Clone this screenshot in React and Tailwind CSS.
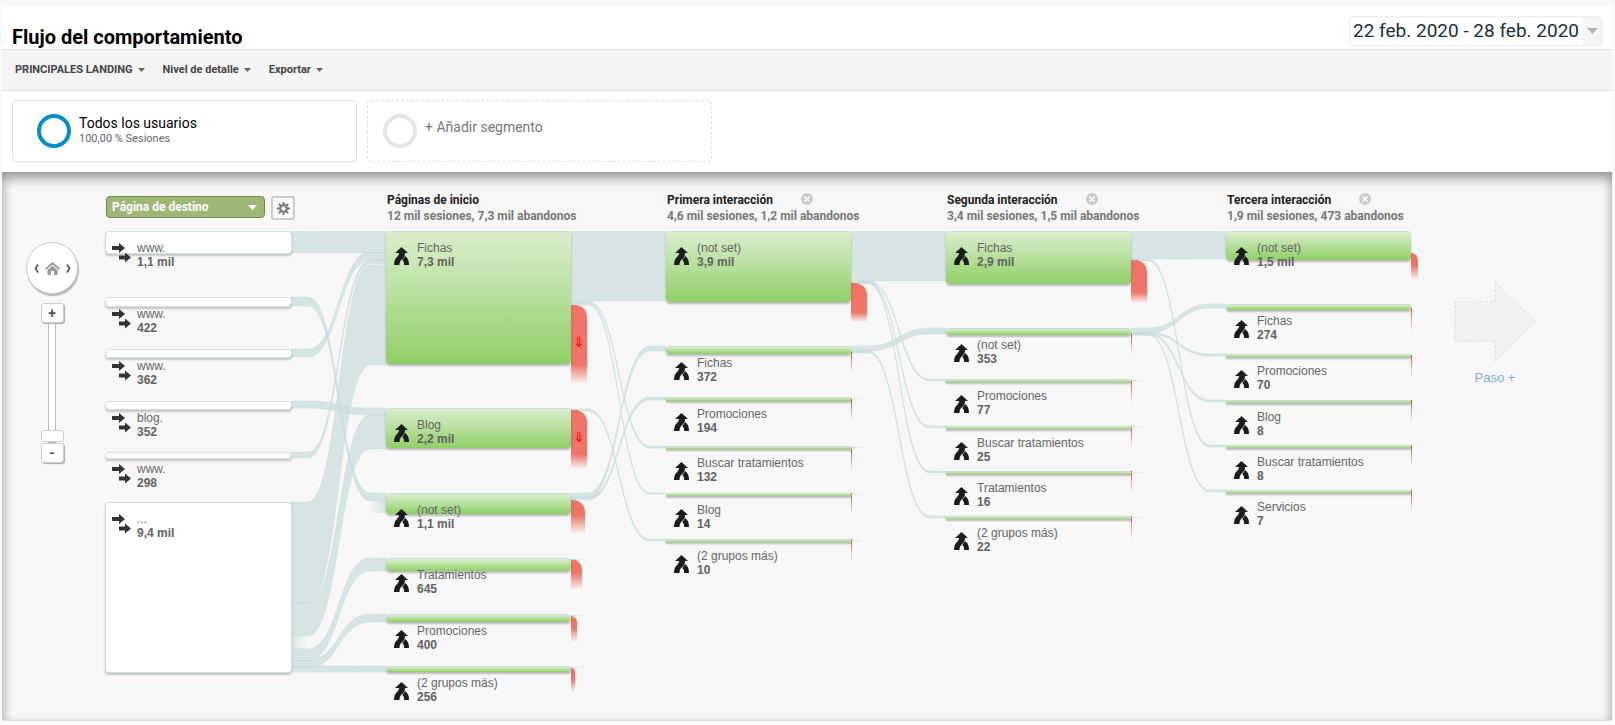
import React, { useState } from 'react'

const columns = [
  {
    title: 'Páginas de inicio',
    summary: '12 mil sesiones, 7,3 mil abandonos',
    nodes: [
      { y: 0, h: 133, name: 'Fichas', value: '7,3 mil', drop: { y: 74, w: 16, h: 79, arrow: true } },
      { y: 177, h: 40, name: 'Blog', value: '2,2 mil', drop: { y: 179, w: 16, h: 59, arrow: true } },
      { y: 262, h: 21, name: '(not set)', value: '1,1 mil', drop: { y: 269, w: 14, h: 34 } },
      { y: 327, h: 13, name: 'Tratamientos', value: '645', drop: { y: 328, w: 11, h: 31 }, stub: true },
      { y: 383, h: 8, name: 'Promociones', value: '400', drop: { y: 385, w: 6, h: 26 }, stub: true },
      { y: 435, h: 6, name: '(2 grupos más)', value: '256', drop: { y: 437, w: 4, h: 24 }, stub: true },
    ],
  },
  {
    title: 'Primera interacción',
    summary: '4,6 mil sesiones, 1,2 mil abandonos',
    removable: true,
    nodes: [
      { y: 0, h: 71, name: '(not set)', value: '3,9 mil', drop: { y: 52, w: 16, h: 39 } },
      { y: 115, h: 8, name: 'Fichas', value: '372', drop: { y: 121, w: 1, h: 21 } },
      { y: 166, h: 4, name: 'Promociones', value: '194', drop: { y: 168, w: 1, h: 22 }, stub: true },
      { y: 215, h: 3, name: 'Buscar tratamientos', value: '132', drop: { y: 218, w: 1, h: 22 }, stub: true },
      { y: 262, h: 3, name: 'Blog', value: '14', drop: { y: 262, w: 1, h: 22 }, stub: true },
      { y: 308, h: 3, name: '(2 grupos más)', value: '10', drop: { y: 308, w: 1, h: 22 }, stub: true },
    ],
  },
  {
    title: 'Segunda interacción',
    summary: '3,4 mil sesiones, 1,5 mil abandonos',
    removable: true,
    nodes: [
      { y: 0, h: 53, name: 'Fichas', value: '2,9 mil', drop: { y: 29, w: 16, h: 43 } },
      { y: 97, h: 7, name: '(not set)', value: '353', drop: { y: 103, w: 1, h: 21 } },
      { y: 148, h: 3, name: 'Promociones', value: '77', drop: { y: 149, w: 1, h: 22 }, stub: true },
      { y: 195, h: 3, name: 'Buscar tratamientos', value: '25', drop: { y: 195, w: 1, h: 22 }, stub: true },
      { y: 240, h: 3, name: 'Tratamientos', value: '16', drop: { y: 240, w: 1, h: 22 }, stub: true },
      { y: 285, h: 3, name: '(2 grupos más)', value: '22', drop: { y: 285, w: 1, h: 22 }, stub: true },
    ],
  },
  {
    title: 'Tercera interacción',
    summary: '1,9 mil sesiones, 473 abandonos',
    removable: true,
    nodes: [
      { y: 0, h: 29, name: '(not set)', value: '1,5 mil', drop: { y: 22, w: 7, h: 27 } },
      { y: 73, h: 6, name: 'Fichas', value: '274', drop: { y: 77, w: 1, h: 22 } },
      { y: 123, h: 3, name: 'Promociones', value: '70', drop: { y: 124, w: 1, h: 22 } },
      { y: 169, h: 3, name: 'Blog', value: '8', drop: { y: 169, w: 1, h: 22 } },
      { y: 214, h: 3, name: 'Buscar tratamientos', value: '8', drop: { y: 214, w: 1, h: 22 } },
      { y: 259, h: 3, name: 'Servicios', value: '7', drop: { y: 259, w: 1, h: 22 } },
    ],
  },
]

const landings = [
  { y: 0, h: 23, name: 'www.', value: '1,1 mil' },
  { y: 66, h: 10, name: 'www.', value: '422' },
  { y: 118, h: 9, name: 'www.', value: '362' },
  { y: 170, h: 9, name: 'blog.', value: '352' },
  { y: 221, h: 7, name: 'www.', value: '298' },
  { y: 271, h: 171, name: '...', value: '9,4 mil' },
]

// [gap between columns, source top, source bottom, target top, target bottom]
const flows = [
  [0, 0, 22, 0, 22],
  [0, 66, 75, 262, 270],
  [0, 118, 126, 21, 29],
  [0, 170, 177, 177, 184],
  [0, 221, 227, 29, 33],
  [0, 271, 372, 34, 134],
  [0, 372, 405, 184, 218],
  [0, 418, 430, 327, 340],
  [0, 429, 437, 383, 391],
  [0, 435, 441, 435, 441],
  [1, 0, 70, 0, 70],
  [1, 70, 72, 215, 217],
  [1, 72, 74, 262, 263],
  [1, 178, 180, 308, 310],
  [1, 262, 267, 115, 120],
  [1, 266, 269, 166, 169],
  [2, 0, 50, 0, 50],
  [2, 50, 51, 148, 150],
  [2, 51, 52, 195, 197],
  [2, 51, 53, 240, 242],
  [2, 115, 120, 97, 103],
  [2, 120, 122, 285, 287],
  [3, 0, 28, 0, 28],
  [3, 28, 30, 214, 216],
  [3, 97, 102, 73, 77],
  [3, 101, 103, 123, 125],
  [3, 102, 104, 169, 171],
  [3, 103, 104, 259, 261],
]

function flowPath([gap, s0, s1, t0, t1]) {
  const x = 185 + gap * 280
  const a = x + 17
  const b = x + 79
  const m = x + 48
  const end = x + 95
  return `M${x} ${s0}H${a}C${m} ${s0} ${m} ${t0} ${b} ${t0}H${end}V${t1}H${b}C${m} ${t1} ${m} ${s1} ${a} ${s1}H${x}Z`
}

function Caret({ className = 'text-[#666]' }) {
  return (
    <svg className={className} width="7" height="4" viewBox="0 0 7 4" fill="currentColor" aria-hidden="true">
      <path d="M0 0h7L3.5 4z" />
    </svg>
  )
}

function Header() {
  return (
    <header className="flex h-[43px] justify-between pl-2.5 pr-2.5">
      <h1 className="self-end text-xl leading-[24px] font-bold text-black">Flujo del comportamiento</h1>
      <button className="mt-2.5 flex h-[30px] items-center overflow-hidden rounded border border-[#eee] bg-white pl-[3px] text-[19px] leading-[28px] text-[#222d3a]">
        22 feb. 2020 - 28 feb. 2020
        <span className="ml-1 flex h-full w-[18px] items-center justify-center bg-[#f5f5f5]">
          <svg width="11" height="6" viewBox="0 0 11 6" fill="#b3b3b3" aria-hidden="true"><path d="M0 0h11L5.5 6z" /></svg>
        </span>
      </button>
    </header>
  )
}

function Toolbar() {
  return (
    <div className="flex h-[42px] items-center gap-[18px] border-y border-[#e2e2e2] bg-[#f4f4f4] px-[13px] text-[11px] font-bold text-[#444]">
      {['PRINCIPALES LANDING', 'Nivel de detalle', 'Exportar'].map(label => (
        <button key={label} className="flex items-center gap-[5px]">
          {label}
          <Caret />
        </button>
      ))}
    </div>
  )
}

function Segments() {
  return (
    <div className="flex gap-2.5 px-2.5 pt-[9px] pb-2.5">
      <button className="flex h-[62px] w-[345px] items-center rounded border border-[#e2e2e2] pl-6 text-left">
        <span className="mr-2 size-[34px] rounded-full border-4 border-[#058dc7]" />
        <span className="flex flex-col pb-0.5">
          <span className="text-sm leading-[18px] text-black">Todos los usuarios</span>
          <span className="text-[11px] leading-[14px] text-[#666]">100,00 % Sesiones</span>
        </span>
      </button>
      <button className="flex h-[62px] w-[345px] items-center rounded border border-dashed border-[#e2e2e2] pl-[15px] text-left">
        <span className="mr-2 size-[34px] rounded-full border-4 border-[#e5e5e5]" />
        <span className="pb-2 text-sm text-[#777]">+ Añadir segmento</span>
      </button>
    </div>
  )
}

function ZoomControls() {
  const [zoom, setZoom] = useState(0)
  const btn = 'flex h-5 w-[23px] items-center justify-center rounded-[3px] border border-[#ccc] bg-white text-sm font-bold leading-none text-[#555] shadow-[1px_1px_1px_#aaa]'

  return (
    <div className="flex w-[52px] shrink-0 flex-col items-center pt-[54px]">
      <div className="flex size-[52px] items-center justify-center gap-[6px] rounded-full border border-[#ccc] bg-white text-[#555] shadow-[1px_2px_1px_#b5b5b5]">
        <button aria-label="Desplazar a la izquierda">
          <svg width="5" height="9" viewBox="0 0 5 9" fill="none" stroke="currentColor" strokeWidth="1.7"><path d="M4 .5L1.5 4.5 4 8.5" /></svg>
        </button>
        <button aria-label="Inicio">
          <svg width="15" height="13" viewBox="0 0 15 13" fill="#999">
            <path d="M7.5 0L15 6.5l-1.2 1.3L7.5 2.4 1.2 7.8 0 6.5z" />
            <path d="M7.5 3.8L12.5 8v5H9V9H6v4H2.5V8z" />
          </svg>
        </button>
        <button aria-label="Desplazar a la derecha">
          <svg width="5" height="9" viewBox="0 0 5 9" fill="none" stroke="currentColor" strokeWidth="1.7"><path d="M1 .5l2.5 4L1 8.5" /></svg>
        </button>
      </div>
      <div className="mt-[9px] flex flex-col items-center">
        <button className={btn} aria-label="Acercar" onClick={() => setZoom(Math.min(10, zoom + 1))}>+</button>
        <input
          type="range"
          min="0"
          max="10"
          value={zoom}
          onChange={e => setZoom(Number(e.target.value))}
          aria-label="Zoom"
          className="h-[120px] w-[23px] appearance-none bg-transparent [direction:rtl] [writing-mode:vertical-lr] [&::-webkit-slider-runnable-track]:box-border [&::-webkit-slider-runnable-track]:mx-auto [&::-webkit-slider-runnable-track]:w-2 [&::-webkit-slider-runnable-track]:border [&::-webkit-slider-runnable-track]:border-solid [&::-webkit-slider-runnable-track]:border-[#bbb] [&::-webkit-slider-runnable-track]:bg-white [&::-webkit-slider-thumb]:box-border [&::-webkit-slider-thumb]:-ml-2 [&::-webkit-slider-thumb]:h-3 [&::-webkit-slider-thumb]:w-[23px] [&::-webkit-slider-thumb]:appearance-none [&::-webkit-slider-thumb]:rounded-[3px] [&::-webkit-slider-thumb]:border [&::-webkit-slider-thumb]:border-solid [&::-webkit-slider-thumb]:border-[#ccc] [&::-webkit-slider-thumb]:bg-white"
        />
        <button className={btn} aria-label="Alejar" onClick={() => setZoom(Math.max(0, zoom - 1))}>-</button>
      </div>
    </div>
  )
}

function NodeLabel({ name, value, source }) {
  return (
    <div className="absolute top-2.5 left-0 flex w-full font-['Liberation_Sans',sans-serif] text-xs leading-[14px] text-[#666]">
      <span className={source ? 'w-[31px] shrink-0 pt-0.5 pl-1.5' : 'w-[31px] shrink-0 pt-1.5 pl-2'}>
        {source ? (
          <svg width="19" height="20" viewBox="0 0 19 20" fill="#333" aria-hidden="true">
            <path d="M0 3h7V0l6 5-6 5V7H0z" />
            <path d="M7 12.5h6v-3l6 5-6 5v-3H7z" />
          </svg>
        ) : (
          <svg width="15" height="18" viewBox="0 0 15 18" fill="#1c1c1c" aria-hidden="true">
            <path d="M7.5 0L14 6h-3c0 3-.7 4-2.5 5.7C6.3 13.7 5.5 14.7 5.5 18H0c0-4 1-6 3-8 1.7-1.7 2-2.5 2-4H1z" />
            <path d="M11.2 9C14 11.5 15 13.5 15 18h-4.8c0-2.5-.4-3.5-1.9-5z" />
          </svg>
        )}
      </span>
      <span className="flex flex-col whitespace-nowrap">
        <span>{name}</span>
        <b className="text-[#626262]">{value}</b>
      </span>
    </div>
  )
}

function Dropoff({ y, w, h, arrow }) {
  const fade = w === 16
    ? 'from-[#ee7465] from-75% rounded-tr-xl'
    : w > 1 ? 'from-[#ee7465] from-45% rounded-tr-xl' : 'from-[#e2452f]'
  return (
    <div
      className={`absolute left-full flex justify-center bg-linear-to-b to-transparent ${fade}`}
      style={{ top: y, width: w, height: h }}
    >
      {arrow && <span className="self-center pb-1.5 font-['DejaVu_Sans',sans-serif] text-sm leading-none text-[#ff0000]">⇓</span>}
    </div>
  )
}

function Node({ node }) {
  const round = node.h > 5 ? 'rounded' : ''
  return (
    <div className="absolute left-0 w-full" style={{ top: node.y }}>
      <div
        className={`border-t border-[#c9dcdc] bg-linear-to-b from-[#dbeecd] to-[#90cf66] shadow-[0_2px_2px_rgba(0,0,0,0.25)] ${round}`}
        style={{ height: node.h }}
      />
      {node.stub && <div className="absolute top-px left-full h-px w-3.5 bg-linear-to-r from-[#c9dcdc] to-transparent" />}
      <NodeLabel name={node.name} value={node.value} />
    </div>
  )
}

function InteractionColumn({ column }) {
  return (
    <section className="w-[185px] shrink-0">
      <div className="h-[43px] pt-1 pl-px text-xs leading-4 font-bold whitespace-nowrap text-[#777]">
        <div className="flex items-center text-[#222]">
          <h2>{column.title}</h2>
          {column.removable && (
            <button className="ml-7 pb-0.5" aria-label={`Quitar ${column.title}`}>
              <svg width="12" height="12" viewBox="0 0 12 12">
                <circle cx="6" cy="6" r="6" fill="#ccc" />
                <path d="M3.5 3.5l5 5m0-5l-5 5" stroke="#fff" strokeWidth="1.5" />
              </svg>
            </button>
          )}
        </div>
        <p>{column.summary}</p>
      </div>
      <div className="relative">
        {column.nodes.map(n => <Dropoff key={n.y} {...n.drop} />)}
        {column.nodes.map(n => <Node key={n.y} node={n} />)}
      </div>
    </section>
  )
}

function LandingColumn() {
  return (
    <section className="w-[185px] shrink-0">
      <div className="flex h-[43px] items-start gap-1.5 pt-2">
        <div className="relative shrink-0">
          <select aria-label="Dimensión" className="block h-[22px] w-[159px] appearance-none rounded-sm border border-[#6d8b4b] bg-[#9db776] pl-[5px] text-xs font-bold text-white">
            <option>Página de destino</option>
          </select>
          <svg className="pointer-events-none absolute top-[9px] right-2" width="9" height="5" viewBox="0 0 9 5" fill="#fff"><path d="M0 0h9L4.5 5z" /></svg>
        </div>
        <button aria-label="Configuración" className="flex size-6 shrink-0 items-center justify-center rounded-[3px] border-2 border-[#ccc] bg-[#f8f8f8]">
          <svg width="13" height="13" viewBox="0 0 13 13" fill="none" stroke="#777">
            <circle cx="6.5" cy="6.5" r="3.3" strokeWidth="2.2" />
            <path d="M6.5 0v2.5M6.5 10.5V13M0 6.5h2.5M10.5 6.5H13M1.9 1.9l1.7 1.7M9.4 9.4l1.7 1.7M1.9 11.1l1.7-1.7M9.4 3.6l1.7-1.7" strokeWidth="2" />
          </svg>
        </button>
      </div>
      <div className="relative">
        {landings.map(n => (
          <div key={n.y} className="absolute left-0 w-full" style={{ top: n.y }}>
            <div className="-mx-px rounded border border-[#d0dfdf] bg-white shadow-[0_2px_2px_rgba(0,0,0,0.2)]" style={{ height: n.h }} />
            <NodeLabel name={n.name} value={n.value} source />
          </div>
        ))}
      </div>
    </section>
  )
}

function FlowLines() {
  return (
    <svg className="absolute top-[43px] left-0" width="1305" height="450" aria-hidden="true">
      <defs>
        <linearGradient id="fadeOut">
          <stop offset="0" stopColor="#c9dcdc" stopOpacity="0.7" />
          <stop offset="1" stopColor="#c9dcdc" stopOpacity="0" />
        </linearGradient>
        <linearGradient id="fadeIn">
          <stop offset="0" stopColor="#c9dcdc" stopOpacity="0" />
          <stop offset="1" stopColor="#c9dcdc" stopOpacity="0.7" />
        </linearGradient>
      </defs>
      {flows.map(f => (
        <path key={f.join()} d={flowPath(f)} fill="#c9dcdc" fillOpacity="0.7" stroke="#c9dcdc" strokeOpacity="0.5" />
      ))}
      <rect x="185" y="405" width="16" height="13" fill="url(#fadeOut)" />
      <rect x="263" y="270" width="17" height="12" fill="url(#fadeIn)" />
    </svg>
  )
}

function AddStep() {
  return (
    <button className="mt-[93px] ml-[43px] flex shrink-0 flex-col items-center gap-2 self-start font-['Liberation_Sans',sans-serif] text-[13px] leading-4 text-[#7bacd0]">
      <svg width="82" height="81" viewBox="0 0 82 81" aria-hidden="true">
        <path d="M1 21h40V1l40 39.5L41 80V60H1z" fill="#f2f2f2" stroke="#ddd" strokeDasharray="3 2" />
      </svg>
      Paso +
    </button>
  )
}

export default function App() {
  return (
    <div className="bg-[#f8f9fb] pt-1.5 pr-[3px] pl-0.5 font-[Roboto,sans-serif]">
      <main className="bg-white">
        <Header />
        <Toolbar />
        <Segments />
        <div className="flex overflow-hidden border-b border-[#ddd] bg-[#f7f7f7] pt-4 pl-6 shadow-[inset_0_6px_12px_rgba(0,0,0,0.4)]">
          <ZoomControls />
          <div className="relative ml-7 flex h-[532px] shrink-0 gap-[95px]">
            <FlowLines />
            <LandingColumn />
            {columns.map(c => <InteractionColumn key={c.title} column={c} />)}
          </div>
          <AddStep />
        </div>
        <div className="h-1" />
      </main>
    </div>
  )
}
